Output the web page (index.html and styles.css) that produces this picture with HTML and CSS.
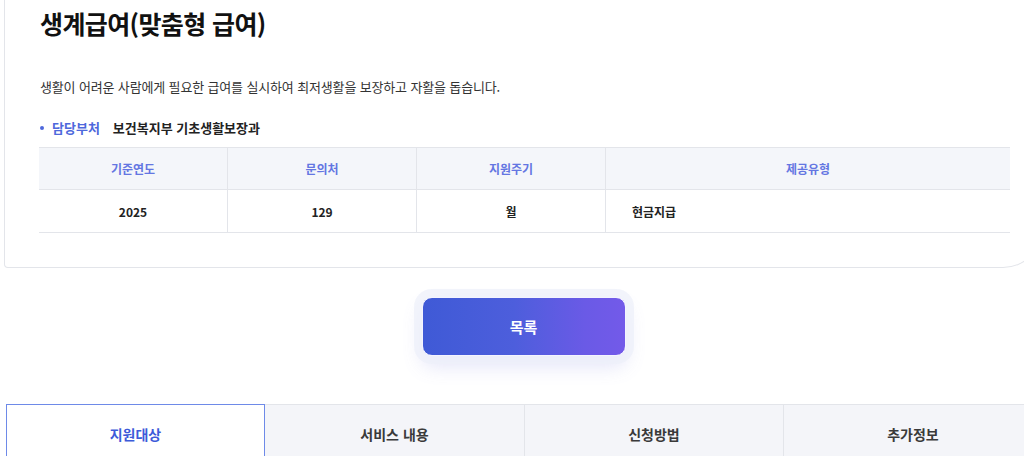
FILE: index.html
```html
<!DOCTYPE html>
<html lang="ko">
<head>
<meta charset="utf-8">
<title>생계급여(맞춤형 급여)</title>
<link rel="stylesheet" href="styles.css">
</head>
<body>
<div class="page">
  <section class="card">
    <h1 class="title">생계급여(맞춤형 급여)</h1>
    <p class="desc">생활이 어려운 사람에게 필요한 급여를 실시하여 최저생활을 보장하고 자활을 돕습니다.</p>
    <div class="dept"><span class="dot"></span><span class="dept-label">담당부처</span><span class="dept-value">보건복지부 기초생활보장과</span></div>
    <table class="info">
      <thead>
        <tr><th class="c1">기준연도</th><th class="c2">문의처</th><th class="c3">지원주기</th><th class="c4">제공유형</th></tr>
      </thead>
      <tbody>
        <tr><td>2025</td><td>129</td><td>월</td><td class="left">현금지급</td></tr>
      </tbody>
    </table>
  </section>
  <div class="actions">
    <button class="list-btn">목록</button>
  </div>
  <nav class="tabs">
    <div class="tab active">지원대상</div>
    <div class="tab">서비스 내용</div>
    <div class="tab">신청방법</div>
    <div class="tab">추가정보</div>
  </nav>
</div>
</body>
</html>
```

FILE: styles.css
```css
html, body {
  margin: 0;
  padding: 0;
  background: #ffffff;
  overflow: hidden;
}
body {
  font-family: "Noto Sans CJK KR", "Noto Sans", sans-serif;
  color: #222;
}
.page {
  width: 1039px;
  margin-left: 4px;
}
.card {
  border: 1px solid #e3e5ea;
  border-top: none;
  border-radius: 0 0 40px 4px;
  padding: 3px 32px 34px 34px;
  background: #fff;
}
.title {
  margin: 0 0 0 1px;
  font-size: 25px;
  line-height: 40px;
  font-weight: 700;
  color: #111;
  letter-spacing: -0.6px;
}
.desc {
  margin: 34px 0 0 1px;
  font-size: 13px;
  line-height: 20px;
  color: #333;
  letter-spacing: -0.15px;
}
.dept {
  margin-top: 21px;
  display: flex;
  align-items: center;
  font-size: 13px;
  line-height: 20px;
  font-weight: 700;
}
.dot {
  width: 4px;
  height: 4px;
  border-radius: 50%;
  background: #4e68dc;
  margin: 0 8px 0 1px;
}
.dept-label {
  color: #4e68dc;
  margin-right: 13px;
}
.dept-value {
  color: #222;
}
.info {
  margin-top: 9px;
  width: 971px;
  border-collapse: collapse;
  font-size: 12px;
}
.info th {
  height: 41px;
  background: #f4f6fa;
  color: #6476e2;
  font-weight: 700;
  border-top: 1px solid #e3e5ea;
  border-bottom: 1px solid #e3e5ea;
  border-left: 1px solid #e3e5ea;
  padding: 0;
}
.info td {
  height: 42px;
  font-weight: 700;
  color: #222;
  text-align: center;
  border-bottom: 1px solid #e3e5ea;
  border-left: 1px solid #e3e5ea;
  padding: 0;
}
.info th:first-child, .info td:first-child { border-left: none; }
.info .c1, .info .c2, .info .c3 { width: 188px; }
.info td.left {
  text-align: left;
  padding-left: 26px;
}
.actions {
  display: flex;
  justify-content: center;
  padding-top: 29px;
}
.list-btn {
  width: 204px;
  height: 59px;
  border: 1.5px solid #f4f4ff;
  border-radius: 10px;
  background: linear-gradient(90deg, #3f5ad6 0%, #4d5edc 45%, #6a5ae6 80%, #735ae9 100%);
  color: #fff;
  font-family: "Noto Sans CJK KR", "Noto Sans", sans-serif;
  font-size: 15px;
  font-weight: 700;
  box-shadow: 0 0 0 8px rgba(238, 240, 250, 0.75), 0 10px 20px rgba(110, 115, 220, 0.2);
  cursor: pointer;
}
.tabs {
  margin-top: 48px;
  margin-left: 2px;
  display: grid;
  grid-template-columns: repeat(4, 1fr);
  width: 1036px;
}
.tab {
  height: 58px;
  display: flex;
  align-items: center;
  justify-content: center;
  font-size: 14px;
  font-weight: 700;
  color: #3a3a3a;
  background: #f4f5f9;
  border-top: 1px solid #e3e5ea;
  border-left: 1px solid #e3e5ea;
  box-sizing: border-box;
}
.tab.active {
  background: #fff;
  color: #3d5bd9;
  border: 1px solid #6e8ae8;
  border-bottom: none;
}
.tab.active + .tab { border-left: none; }
```
